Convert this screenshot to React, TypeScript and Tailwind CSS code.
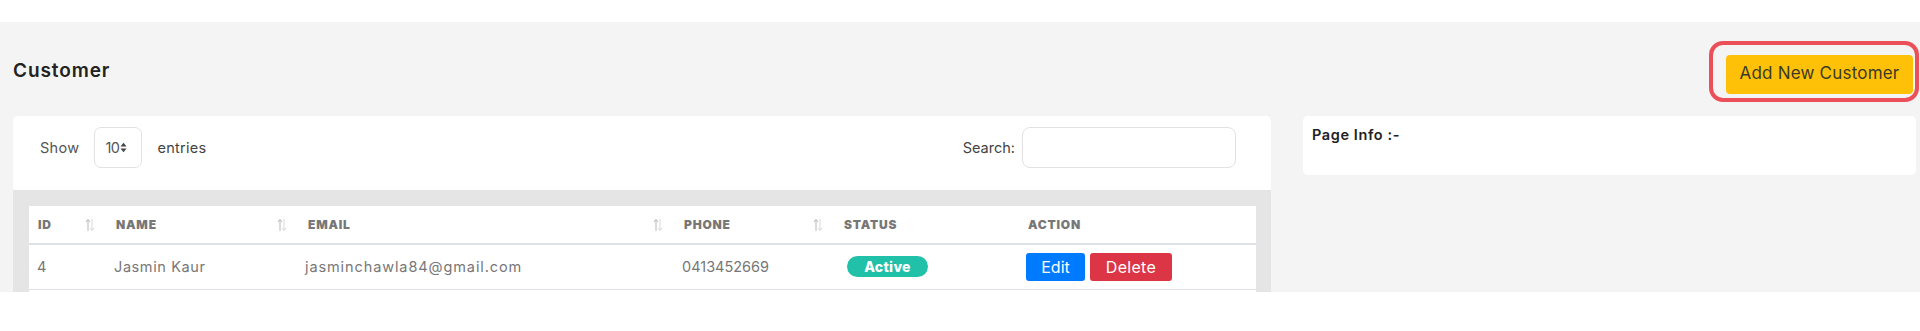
import React from "react";

function SortIcon() {
  return (
    <svg width="10" height="14" viewBox="0 0 10 14" className="shrink-0">
      <path d="M3 13V1.5M1 4l2-2.5L5 4" fill="none" stroke="#b8b8b8" strokeWidth="1" />
      <path d="M7 1v11.5M5 10l2 2.5L9 10" fill="none" stroke="#d8d8d8" strokeWidth="1" />
    </svg>
  );
}

function UpDown() {
  return (
    <svg width="7" height="11" viewBox="0 0 7 11">
      <path d="M0.5 4.5L3.5 0.8L6.5 4.5Z" fill="#444" />
      <path d="M0.5 6.5L3.5 10.2L6.5 6.5Z" fill="#444" />
    </svg>
  );
}

export default function App() {
  const columns = [
    { label: "ID", width: "w-[78px]", sort: true },
    { label: "NAME", width: "w-[192px]", sort: true },
    { label: "EMAIL", width: "w-[376px]", sort: true },
    { label: "PHONE", width: "w-[160px]", sort: true },
    { label: "STATUS", width: "w-[184px]", sort: false },
    { label: "ACTION", width: "flex-1", sort: false },
  ];

  return (
    <div className="w-[1920px] h-[331px] bg-white font-['Inter','Open_Sans',sans-serif] overflow-hidden">
      <div className="mt-[22px] h-[270px] bg-[#f4f4f4] overflow-hidden">
        {/* title row */}
        <div className="h-[94px] pt-[4px] pl-[13px] pr-[1px] flex items-center justify-between">
          <h1 className="text-[19px] font-semibold text-[#222] tracking-[0.9px]">Customer</h1>
          <div className="border-[4px] border-[#ea4f5a] rounded-[14px] pl-[13px] pr-[2px] pt-[10px] pb-[4px]">
            <button className="h-[39px] w-[187px] bg-[#ffc107] rounded-[4px] text-[17px] text-[#3a3a2a] tracking-[0.2px]">
              Add New Customer
            </button>
          </div>
        </div>

        <div className="flex items-start">
          {/* table card */}
          <div className="ml-[13px] w-[1258px] bg-white rounded-[5px] overflow-hidden">
            <div className="h-[74px] pt-[11px] pl-[27px] pr-[35px] flex items-start justify-between">
              <div className="flex items-center h-[41px] text-[14.5px] text-[#555] tracking-[0.3px]">
                <span>Show</span>
                <div className="ml-[15px] w-[48px] h-[41px] border border-[#e2e2e2] rounded-[7px] flex items-center pl-[10px] gap-[1px] text-[#555]">
                  <span className="tracking-[-0.5px]">10</span>
                  <UpDown />
                </div>
                <span className="ml-[15px] text-[#444]">entries</span>
              </div>
              <div className="flex items-center h-[41px] text-[14.5px] text-[#444]">
                <span>Search:</span>
                <input className="ml-[7px] w-[214px] h-[41px] border border-[#e2e2e2] rounded-[8px] outline-none" />
              </div>
            </div>

            <div className="bg-[#e5e5e5] pl-[16px] pr-[15px] pt-[16px]">
              <div className="bg-white">
                <div className="flex h-[39px] border-b-2 border-[#dee2e6] items-center">
                  {columns.map((c) => (
                    <div key={c.label} className={`${c.width} pl-[9px] pr-[12px] flex items-center justify-between`}>
                      <span className="text-[12px] font-black text-[#777] tracking-[0.8px]">{c.label}</span>
                      {c.sort && <SortIcon />}
                    </div>
                  ))}
                </div>
                <div className="flex h-[45px] border-b border-[#dee2e6] items-center text-[14.5px] text-[#777]">
                  <div className="w-[78px] pl-[8px]">4</div>
                  <div className="w-[192px] pl-[7px] tracking-[0.6px]">Jasmin Kaur</div>
                  <div className="w-[376px] pl-[6px] tracking-[0.9px]">jasminchawla84@gmail.com</div>
                  <div className="w-[160px] pl-[7px]">0413452669</div>
                  <div className="w-[184px] pl-[12px]">
                    <span className="inline-flex items-center justify-center w-[81px] h-[21px] rounded-full bg-[#20c0a9] text-white text-[14px] font-extrabold tracking-[0.3px]">
                      Active
                    </span>
                  </div>
                  <div className="flex-1 pl-[7px] flex gap-[5px]">
                    <button className="w-[59px] h-[28px] bg-[#007bff] rounded-[3px] text-white text-[16px]">Edit</button>
                    <button className="w-[82px] h-[28px] bg-[#dc3545] rounded-[3px] text-white text-[16px] tracking-[0.3px]">Delete</button>
                  </div>
                </div>
                <div className="h-[20px]" />
              </div>
            </div>
          </div>

          {/* page info card */}
          <div className="ml-[32px] w-[613px] h-[59px] bg-white rounded-[5px] pl-[9px] pt-[9px]">
            <div className="text-[14.5px] leading-[20px] font-semibold text-[#222] tracking-[0.6px]">Page Info :-</div>
          </div>
        </div>
      </div>
    </div>
  );
}
